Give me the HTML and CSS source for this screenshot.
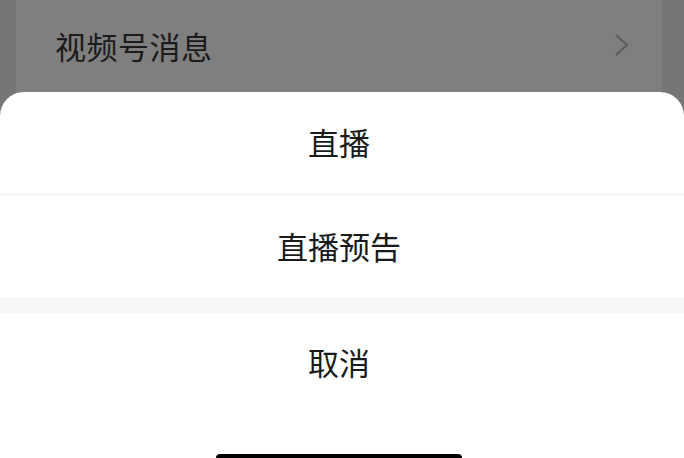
FILE: index.html
```html
<!DOCTYPE html>
<html lang="zh">
<head>
<meta charset="utf-8">
<link rel="stylesheet" href="styles.css">
</head>
<body>
<div class="screen">
  <div class="page">
    <div class="page-row">
      <span class="page-label">视频号消息</span>
      <svg class="chev" width="16" height="24" viewBox="0 0 16 24"><path d="M2 2 L13 12 L2 22" fill="none" stroke="#5c5c5c" stroke-width="2"/></svg>
    </div>
  </div>
  <div class="sheet">
    <div class="item">直播</div>
    <div class="item divided">直播预告</div>
    <div class="gap"></div>
    <div class="item cancel">取消</div>
    <div class="home-area"><div class="home-bar"></div></div>
  </div>
</div>
</body>
</html>
```
FILE: styles.css
```css
html, body {
  margin: 0;
  padding: 0;
}
body {
  width: 684px;
  height: 458px;
  overflow: hidden;
  font-family: "Noto Sans CJK SC", "Noto Sans", sans-serif;
}
.screen {
  position: relative;
  width: 684px;
  height: 458px;
  background: #767676;
  display: flex;
  justify-content: center;
}
.page {
  width: 646px;
  margin-left: -6px;
  height: 100%;
  background: #7f7f7f;
}
.page-row {
  display: flex;
  align-items: center;
  justify-content: space-between;
  height: 90px;
  padding: 0 32px 0 39px;
}
.page-label {
  font-size: 31px;
  color: #1b1b1b;
  letter-spacing: 0.5px;
}
.chev {
  display: block;
}
.sheet {
  position: absolute;
  left: 0;
  right: 0;
  top: 92px;
  bottom: 0;
  background: #fff;
  border-radius: 24px 24px 0 0;
  display: flex;
  flex-direction: column;
  padding-right: 6px;
}
.item {
  box-sizing: border-box;
  height: 102px;
  padding-bottom: 3px;
  display: flex;
  align-items: center;
  justify-content: center;
  font-size: 31px;
  color: #1a1a1a;
}
.divided {
  border-top: 1px solid #ededed;
  height: 104px;
  margin-right: -6px;
  padding-right: 6px;
}
.gap {
  height: 15px;
  background: #f6f6f6;
  margin-right: -6px;
}
.cancel {
  height: 100px;
}
.home-area {
  flex: 1;
  display: flex;
  justify-content: center;
  align-items: flex-end;
}
.home-bar {
  width: 246px;
  height: 4px;
  background: #000;
  border-radius: 5px 5px 0 0;
}
```
